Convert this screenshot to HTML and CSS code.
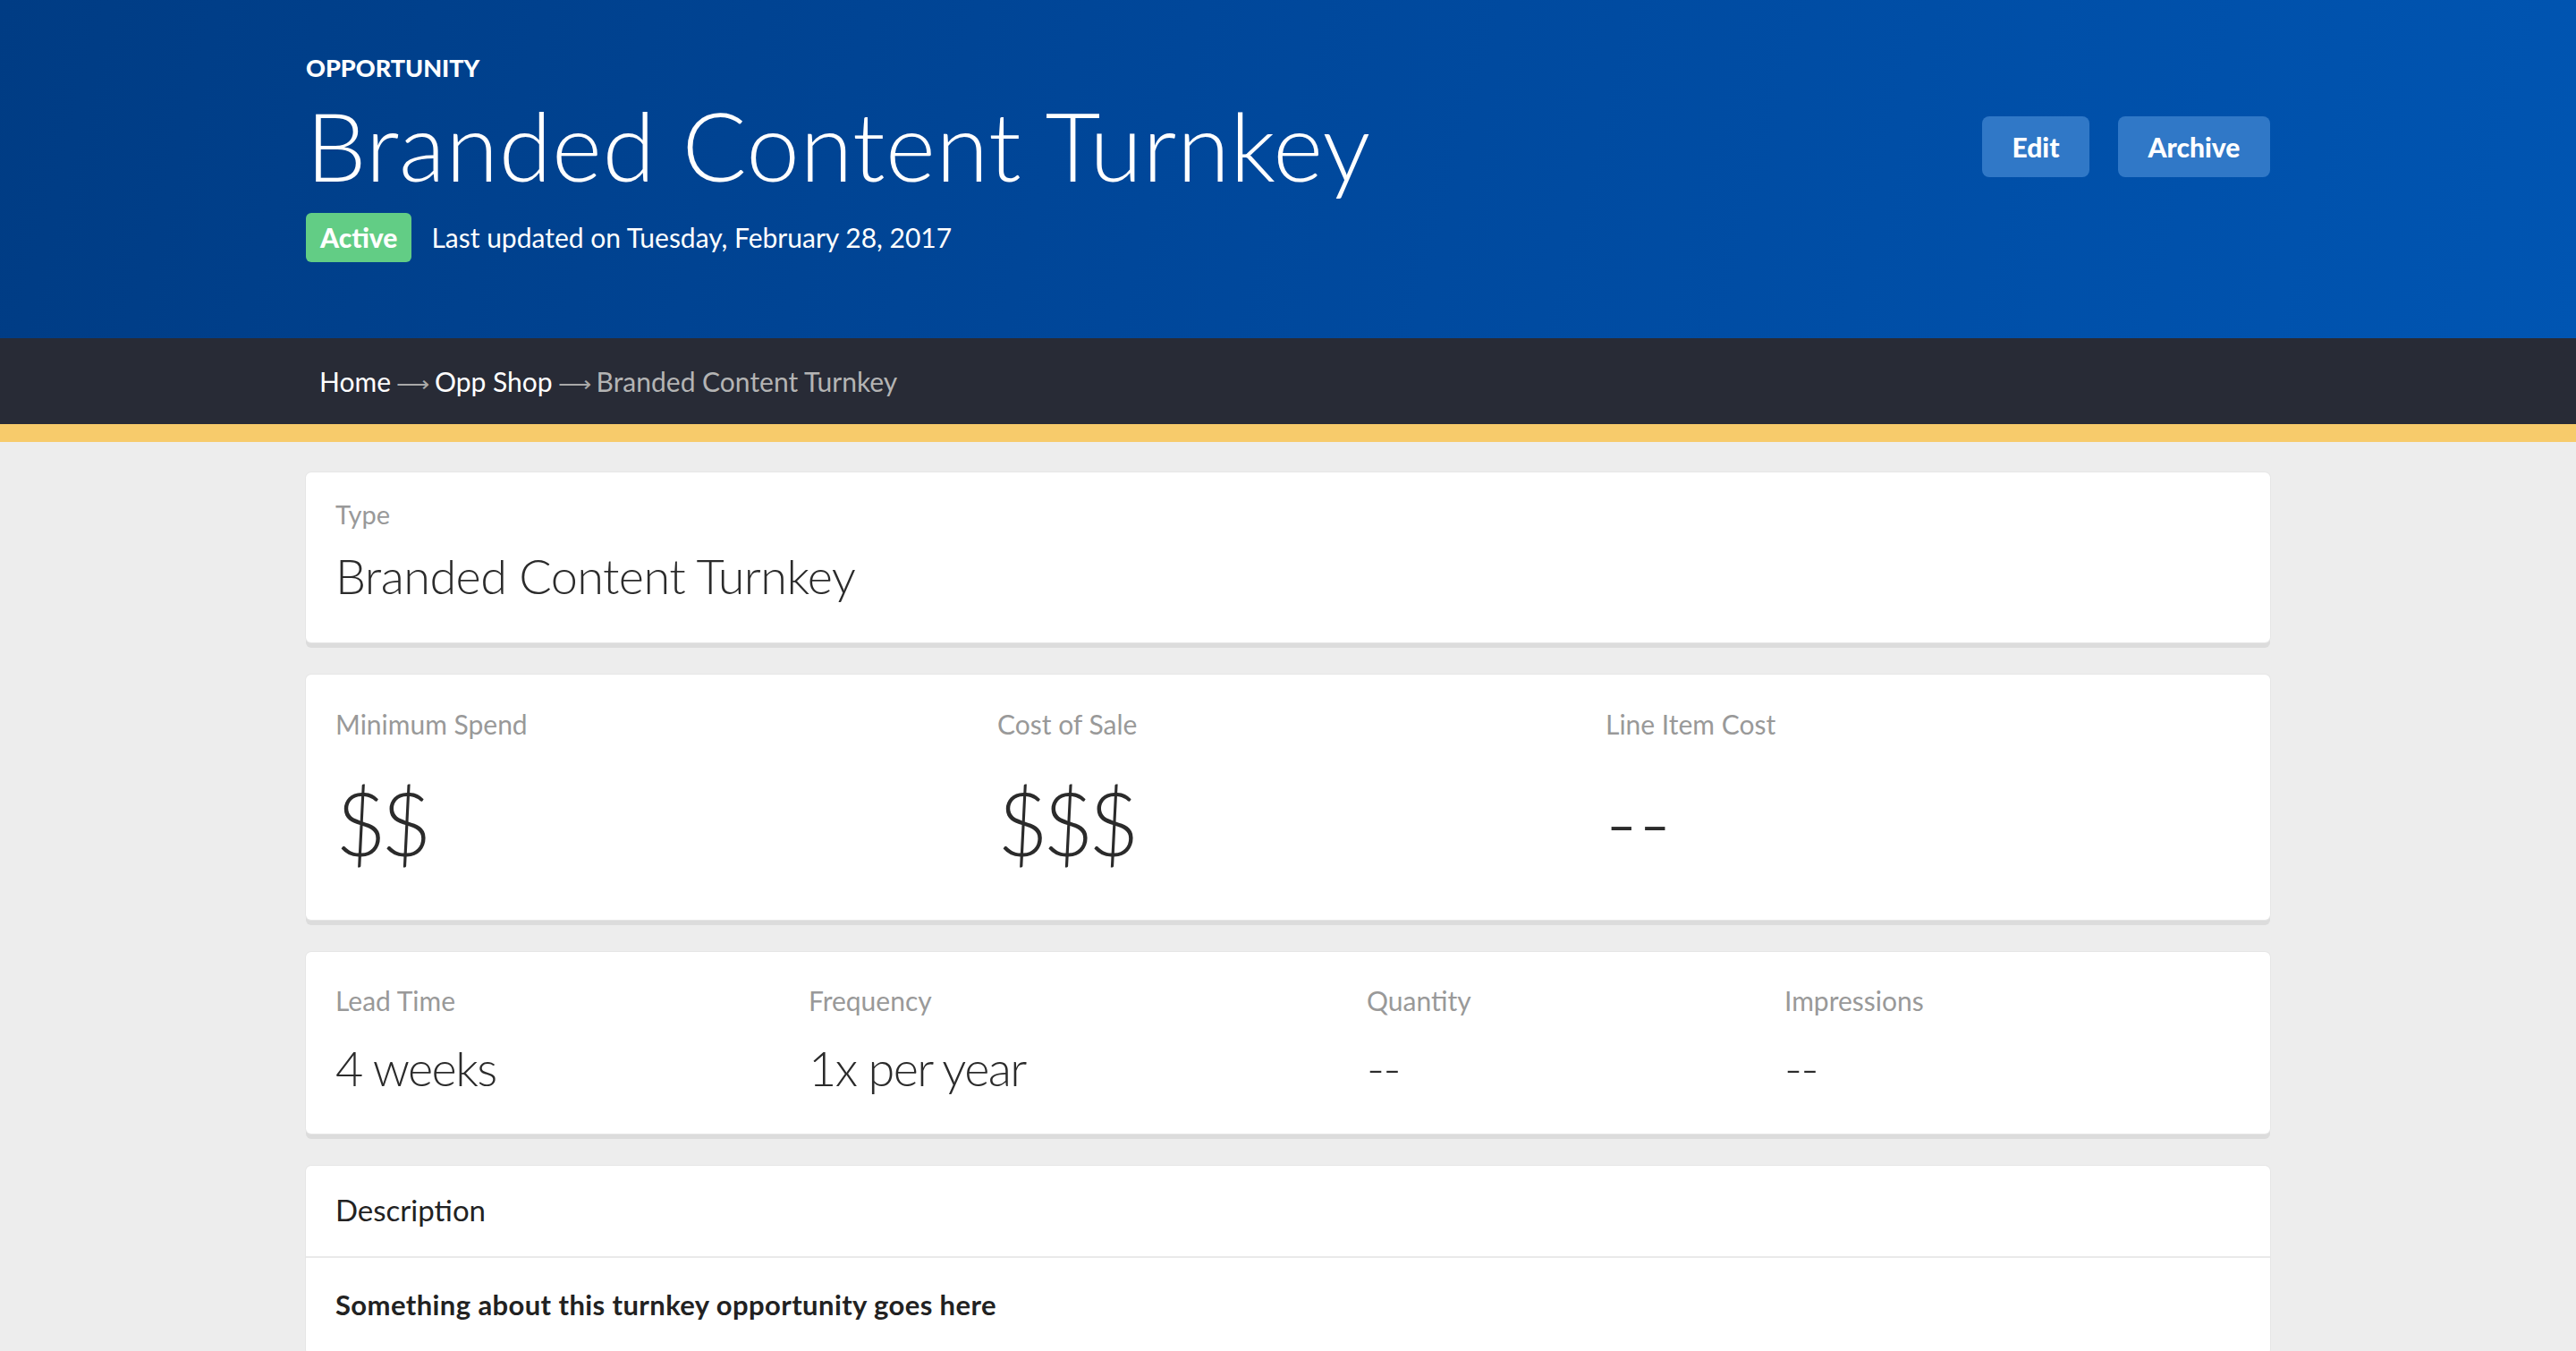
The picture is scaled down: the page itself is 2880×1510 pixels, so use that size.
FILE: index.html
```html
<!DOCTYPE html>
<html lang="en">
<head>
<meta charset="utf-8">
<title>Branded Content Turnkey</title>
<link rel="stylesheet" href="styles.css">
</head>
<body>
<header class="hero">
  <div class="container hero-inner">
    <div class="hero-main">
      <div class="eyebrow">OPPORTUNITY</div>
      <h1 class="title">Branded Content Turnkey</h1>
      <div class="status-row">
        <span class="badge">Active</span>
        <span class="updated">Last updated on Tuesday, February 28, 2017</span>
      </div>
    </div>
    <div class="actions">
      <button class="btn btn-edit">Edit</button>
      <button class="btn btn-archive">Archive</button>
    </div>
  </div>
</header>
<nav class="crumbs">
  <div class="container crumbs-inner">
    <a class="crumb-link">Home</a><span class="arrow">⟶</span><a class="crumb-link">Opp Shop</a><span class="arrow">⟶</span><span class="crumb-current">Branded Content Turnkey</span>
  </div>
</nav>
<div class="stripe"></div>
<main class="container content">
  <section class="card card-type">
    <div class="label">Type</div>
    <div class="value value-md">Branded Content Turnkey</div>
  </section>
  <section class="card card-cost">
    <div class="field">
      <div class="label">Minimum Spend</div>
      <div class="value value-xl">$$</div>
    </div>
    <div class="field">
      <div class="label">Cost of Sale</div>
      <div class="value value-xl">$$$</div>
    </div>
    <div class="field">
      <div class="label">Line Item Cost</div>
      <div class="value value-xl dash">--</div>
    </div>
  </section>
  <section class="card card-meta">
    <div class="field">
      <div class="label">Lead Time</div>
      <div class="value value-md">4 weeks</div>
    </div>
    <div class="field">
      <div class="label">Frequency</div>
      <div class="value value-md">1x per year</div>
    </div>
    <div class="field">
      <div class="label">Quantity</div>
      <div class="value value-md">--</div>
    </div>
    <div class="field">
      <div class="label">Impressions</div>
      <div class="value value-md">--</div>
    </div>
  </section>
  <section class="card card-desc">
    <div class="desc-head">Description</div>
    <div class="desc-body">Something about this turnkey opportunity goes here</div>
  </section>
</main>
</body>
</html>
```
FILE: styles.css
```css
* { box-sizing: border-box; }
html, body { margin: 0; padding: 0; }
body {
  background: #ededed;
  font-family: Lato, "Open Sans", "Liberation Sans", sans-serif;
  color: #2a2a2a;
  height: 1510px;
  overflow: hidden;
}
.container {
  width: 2196px;
  margin: 0 auto;
}
.hero {
  height: 378px;
  background: linear-gradient(105deg, #003c84 0%, #00479a 45%, #0055b2 100%);
  color: #fff;
}
.hero-inner {
  display: flex;
  justify-content: space-between;
  align-items: flex-start;
  padding-top: 62px;
}
.eyebrow {
  font-size: 27px;
  line-height: 1;
  font-weight: 900;
  letter-spacing: 0;
}
.title {
  margin: 19px 0 0 0;
  font-size: 107px;
  line-height: 1;
  font-weight: 300;
  letter-spacing: 0.5px;
}
.status-row {
  display: flex;
  align-items: center;
  margin-top: 23px;
}
.badge {
  background: #62cd85;
  border-radius: 6px;
  height: 55px;
  line-height: 55px;
  padding: 0 16px;
  font-size: 30px;
  font-weight: 900;
}
.updated {
  margin-left: 22px;
  font-size: 30px;
  letter-spacing: 0;
  line-height: 55px;
}
.actions {
  display: flex;
  gap: 32px;
  margin-top: 68px;
}
.btn {
  height: 68px;
  border: 0;
  border-radius: 8px;
  background: #3078c7;
  color: #fff;
  font-family: inherit;
  font-size: 30px;
  font-weight: 900;
  padding: 0;
}
.btn-edit { width: 120px; }
.btn-archive { width: 170px; }
.crumbs {
  height: 96px;
  background: #282b36;
}
.crumbs-inner {
  padding-left: 15px;
  font-size: 30px;
  line-height: 96px;
  white-space: nowrap;
}
.crumb-link { color: #fff; }
.arrow {
  color: #a9a9a9;
  font-family: "DejaVu Sans", sans-serif;
  font-weight: 200;
  margin: 0 6px;
  font-size: 26px;
}
.crumb-current { color: #b4b4b4; }
.stripe {
  height: 20px;
  background: #f7cb6b;
}
.content {
  padding-top: 34px;
}
.card {
  background: #fff;
  border-radius: 6px;
  box-shadow: 0 0 0 1px #e6e6e6, 0 6px 0 #dcdcdc;
  margin-bottom: 36px;
  padding-left: 33px;
  padding-right: 33px;
}
.label {
  font-size: 30px;
  line-height: 1;
  color: #999;
}
.value { line-height: 1; color: #2b2b2b; }
.value-md {
  font-size: 54px;
  font-weight: 300;
  letter-spacing: -1.6px;
}
.value-xl {
  font-size: 98px;
  font-weight: 300;
  letter-spacing: -6px;
}
.card-type {
  height: 190px;
  padding-top: 32px;
}
.card-type .label { font-size: 29px; }
.card-type .value { margin-top: 28px; letter-spacing: -0.6px; }
.card-cost {
  height: 274px;
  padding-top: 40px;
  display: grid;
  grid-template-columns: 740px 680px 1fr;
}
.card-cost .value { margin-top: 46px; }
.card-cost .dash { font-size: 96px; letter-spacing: 2px; }
.card-meta {
  height: 203px;
  padding-top: 39px;
  display: grid;
  grid-template-columns: 529px 624px 467px 1fr;
}
.card-meta .value { margin-top: 34px; }
.card-desc {
  padding-left: 0;
  padding-right: 0;
}
.desc-head {
  padding: 33px 33px 35px;
  font-size: 33px;
  line-height: 1;
  color: #222;
  border-bottom: 2px solid #e9e9e9;
}
.desc-body {
  padding: 37px 33px 40px;
  font-size: 31px;
  line-height: 1;
  font-weight: 700;
  letter-spacing: 0.4px;
  color: #222;
}
```
